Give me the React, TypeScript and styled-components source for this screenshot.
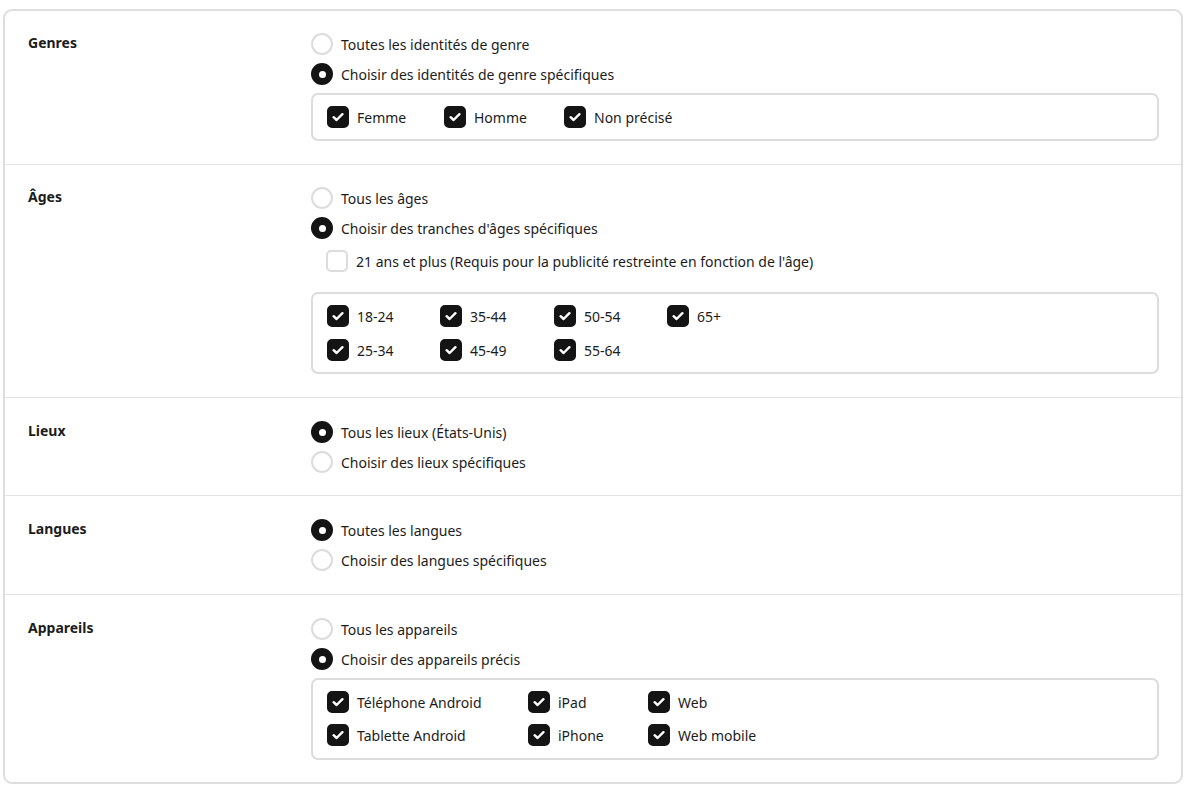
import React from "react";
import styled, { createGlobalStyle } from "styled-components";

const Global = createGlobalStyle`
  html, body { margin: 0; padding: 0; background: #fff; }
  body { font-family: "Noto Sans", "Open Sans", sans-serif; color: #1c1c1c; }
`;

const Page = styled.div`
  padding: 9px 6px 8px 3px;
`;

const Card = styled.div`
  border: 2px solid #dedede;
  border-radius: 9px;
  background: #fff;
`;

const Section = styled.section<{ $pt?: number; $pb?: number }>`
  display: grid;
  grid-template-columns: 283px 1fr;
  padding: ${(p) => p.$pt ?? 18}px 22px ${(p) => p.$pb ?? 19}px 23px;
  & + & { border-top: 1px solid #e2e2e2; }
`;

const Label = styled.div`
  font-size: 14px;
  font-weight: 700;
  line-height: 30px;
  margin-top: -1px;
`;

const Options = styled.div`
  display: flex;
  flex-direction: column;
`;

const OptionRow = styled.div<{ $indent?: number; $top?: number }>`
  display: flex;
  align-items: center;
  gap: 8px;
  height: 30px;
  font-size: 14px;
  margin-left: ${(p) => p.$indent ?? 0}px;
  margin-top: ${(p) => p.$top ?? 0}px;
`;

const Radio = styled.span<{ $on: boolean }>`
  box-sizing: border-box;
  width: 22px;
  height: 22px;
  border-radius: 50%;
  flex: none;
  display: flex;
  align-items: center;
  justify-content: center;
  background: ${(p) => (p.$on ? "#141414" : "#fff")};
  border: 2px solid ${(p) => (p.$on ? "#141414" : "#dcdcdc")};
  &::after {
    content: "";
    display: ${(p) => (p.$on ? "block" : "none")};
    width: 7px;
    height: 7px;
    border-radius: 50%;
    background: #fff;
  }
`;

const Box = styled.span<{ $on: boolean }>`
  box-sizing: border-box;
  width: 22px;
  height: 22px;
  border-radius: 5px;
  flex: none;
  display: flex;
  align-items: center;
  justify-content: center;
  background: ${(p) => (p.$on ? "#141414" : "#fff")};
  border: 2px solid ${(p) => (p.$on ? "#141414" : "#dcdcdc")};
`;

const Group = styled.div<{ $cols: string; $rowGap: number; $top: number; $pb?: number }>`
  margin-top: ${(p) => p.$top}px;
  margin-bottom: 4px;
  border: 2px solid #dcdcdc;
  border-radius: 7px;
  padding: 11px 14px ${(p) => p.$pb ?? 11}px 14px;
  display: grid;
  grid-template-columns: ${(p) => p.$cols};
  row-gap: ${(p) => p.$rowGap}px;
`;

const CheckItem = styled.div`
  display: flex;
  align-items: center;
  gap: 8px;
  height: 22px;
  font-size: 14px;
  white-space: nowrap;
`;

const Check = () => (
  <svg width="12" height="10" viewBox="0 0 12 10">
    <path d="M1.6 5.2 L4.6 8 L10.4 2.2" fill="none" stroke="#fff" strokeWidth="2.4" strokeLinecap="round" strokeLinejoin="round" />
  </svg>
);

const Checkbox = ({ label, on = true }: { label: string; on?: boolean }) => (
  <CheckItem>
    <Box $on={on}>{on && <Check />}</Box>
    <span>{label}</span>
  </CheckItem>
);

const RadioOption = ({ label, on }: { label: string; on: boolean }) => (
  <OptionRow>
    <Radio $on={on} />
    <span>{label}</span>
  </OptionRow>
);

export default function App() {
  return (
    <>
      <Global />
      <Page>
        <Card>
          <Section>
            <Label>Genres</Label>
            <Options>
              <RadioOption label="Toutes les identités de genre" on={false} />
              <RadioOption label="Choisir des identités de genre spécifiques" on />
              <Group $cols="117px 120px 1fr" $rowGap={12} $top={4}>
                <Checkbox label="Femme" />
                <Checkbox label="Homme" />
                <Checkbox label="Non précisé" />
              </Group>
            </Options>
          </Section>
          <Section>
            <Label>Âges</Label>
            <Options>
              <RadioOption label="Tous les âges" on={false} />
              <RadioOption label="Choisir des tranches d'âges spécifiques" on />
              <OptionRow $indent={15} $top={3}>
                <Box $on={false} />
                <span>21 ans et plus (Requis pour la publicité restreinte en fonction de l'âge)</span>
              </OptionRow>
              <Group $cols="113px 114px 113px 1fr" $rowGap={12} $top={16}>
                <Checkbox label="18-24" />
                <Checkbox label="35-44" />
                <Checkbox label="50-54" />
                <Checkbox label="65+" />
                <Checkbox label="25-34" />
                <Checkbox label="45-49" />
                <Checkbox label="55-64" />
              </Group>
            </Options>
          </Section>
          <Section $pt={19} $pb={18}>
            <Label>Lieux</Label>
            <Options>
              <RadioOption label="Tous les lieux (États-Unis)" on />
              <RadioOption label="Choisir des lieux spécifiques" on={false} />
            </Options>
          </Section>
          <Section $pt={19} $pb={19}>
            <Label>Langues</Label>
            <Options>
              <RadioOption label="Toutes les langues" on />
              <RadioOption label="Choisir des langues spécifiques" on={false} />
            </Options>
          </Section>
          <Section $pt={19} $pb={18}>
            <Label>Appareils</Label>
            <Options>
              <RadioOption label="Tous les appareils" on={false} />
              <RadioOption label="Choisir des appareils précis" on />
              <Group $cols="201px 120px 1fr" $rowGap={11} $top={4} $pb={12}>
                <Checkbox label="Téléphone Android" />
                <Checkbox label="iPad" />
                <Checkbox label="Web" />
                <Checkbox label="Tablette Android" />
                <Checkbox label="iPhone" />
                <Checkbox label="Web mobile" />
              </Group>
            </Options>
          </Section>
        </Card>
      </Page>
    </>
  );
}
